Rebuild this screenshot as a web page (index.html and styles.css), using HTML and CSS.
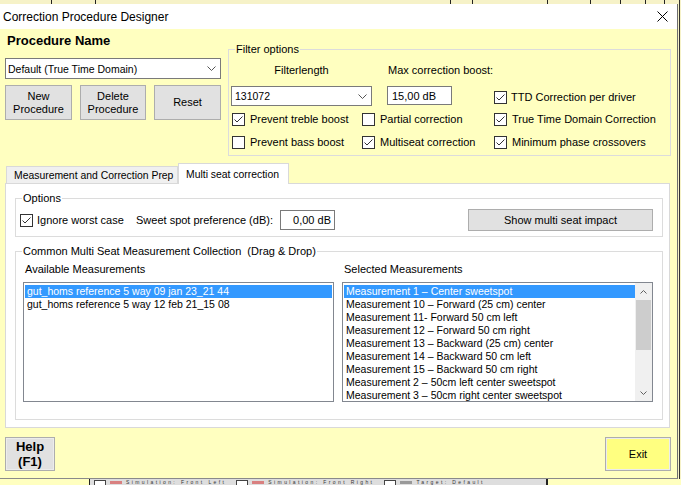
FILE: index.html
```html
<!DOCTYPE html>
<html>
<head>
<meta charset="utf-8">
<title>Correction Procedure Designer</title>
<link rel="stylesheet" href="styles.css">
</head>
<body>
<div class="screen">
  <div class="behind-top">
    <div class="seg s1"></div>
    <div class="seg s2"></div>
    <div class="seg s3"></div>
    <div class="seg s4"></div>
    <div class="seg s5"></div>
    <div class="seg s6"></div>
    <div class="seg s7"></div>
    <div class="seg s8"></div>
    <div class="seg s9"></div>
  </div>
  <div class="window">
    <div class="titlebar">
      <span class="title">Correction Procedure Designer</span>
      <svg class="close" width="11" height="11" viewBox="0 0 11 11"><path d="M0.5 0.5 L10.5 10.5 M10.5 0.5 L0.5 10.5" stroke="#000" stroke-width="1" fill="none"/></svg>
    </div>
    <div class="client">
      <div class="top-row">
        <div class="proc-col">
          <div class="proc-title">Procedure Name</div>
          <div class="combo proc-combo">
            <span>Default (True Time Domain)</span>
            <svg class="chev" width="9" height="5" viewBox="0 0 9 5"><path d="M0.5 0.5 L4.5 4.5 L8.5 0.5" stroke="#555" fill="none"/></svg>
          </div>
          <div class="proc-buttons">
            <div class="btn b-new">New<br>Procedure</div>
            <div class="btn b-del">Delete<br>Procedure</div>
            <div class="btn b-reset">Reset</div>
          </div>
        </div>
        <div class="group filter">
          <span class="legend">Filter options</span>
          <div class="frow r-labels">
            <span class="fl-label">Filterlength</span>
            <span class="mc-label">Max correction boost:</span>
          </div>
          <div class="frow r-inputs">
            <div class="combo fl-combo">
              <span>131072</span>
              <svg class="chev" width="9" height="5" viewBox="0 0 9 5"><path d="M0.5 0.5 L4.5 4.5 L8.5 0.5" stroke="#555" fill="none"/></svg>
            </div>
            <div class="textbox mc-box">15,00 dB</div>
            <label class="check ttd">
              <svg width="13" height="13" viewBox="0 0 13 13"><rect x="0.5" y="0.5" width="12" height="12" fill="#fff" stroke="#333"/><path d="M2.5 6.5 L5 9 L10.5 3.5" fill="none" stroke="#333"/></svg>
              <span>TTD Correction per driver</span>
            </label>
          </div>
          <div class="frow r-c">
            <label class="check">
              <svg width="13" height="13" viewBox="0 0 13 13"><rect x="0.5" y="0.5" width="12" height="12" fill="#fff" stroke="#333"/><path d="M2.5 6.5 L5 9 L10.5 3.5" fill="none" stroke="#333"/></svg>
              <span>Prevent treble boost</span>
            </label>
            <label class="check">
              <svg width="13" height="13" viewBox="0 0 13 13"><rect x="0.5" y="0.5" width="12" height="12" fill="#fff" stroke="#333"/></svg>
              <span>Partial correction</span>
            </label>
            <label class="check">
              <svg width="13" height="13" viewBox="0 0 13 13"><rect x="0.5" y="0.5" width="12" height="12" fill="#fff" stroke="#333"/><path d="M2.5 6.5 L5 9 L10.5 3.5" fill="none" stroke="#333"/></svg>
              <span>True Time Domain Correction</span>
            </label>
          </div>
          <div class="frow r-d">
            <label class="check">
              <svg width="13" height="13" viewBox="0 0 13 13"><rect x="0.5" y="0.5" width="12" height="12" fill="#fff" stroke="#333"/></svg>
              <span>Prevent bass boost</span>
            </label>
            <label class="check">
              <svg width="13" height="13" viewBox="0 0 13 13"><rect x="0.5" y="0.5" width="12" height="12" fill="#fff" stroke="#333"/><path d="M2.5 6.5 L5 9 L10.5 3.5" fill="none" stroke="#333"/></svg>
              <span>Multiseat correction</span>
            </label>
            <label class="check">
              <svg width="13" height="13" viewBox="0 0 13 13"><rect x="0.5" y="0.5" width="12" height="12" fill="#fff" stroke="#333"/><path d="M2.5 6.5 L5 9 L10.5 3.5" fill="none" stroke="#333"/></svg>
              <span>Minimum phase crossovers</span>
            </label>
          </div>
        </div>
      </div>

      <div class="tabs">
        <div class="tabstrip">
          <div class="tab tab1">Measurement and Correction Prep</div>
          <div class="tab active">Multi seat correction</div>
        </div>
        <div class="panel">
          <div class="group options">
            <span class="legend">Options</span>
            <div class="opt-row">
              <label class="check ignore">
                <svg width="13" height="13" viewBox="0 0 13 13"><rect x="0.5" y="0.5" width="12" height="12" fill="#fff" stroke="#333"/><path d="M2.5 6.5 L5 9 L10.5 3.5" fill="none" stroke="#333"/></svg>
                <span>Ignore worst case</span>
              </label>
              <span class="sweet-label">Sweet spot preference (dB):</span>
              <div class="textbox sweet-box">0,00 dB</div>
              <div class="btn impact">Show multi seat impact</div>
            </div>
          </div>
          <div class="group common">
            <span class="legend">Common Multi Seat Measurement Collection &nbsp;(Drag &amp; Drop)</span>
            <div class="lists">
              <div class="list-col">
                <div class="list-label">Available Measurements</div>
                <div class="listbox">
                  <div class="items">
                    <div class="item sel">gut_homs reference 5 way 09 jan 23_21 44</div>
                    <div class="item">gut_homs reference 5 way 12 feb 21_15 08</div>
                  </div>
                </div>
              </div>
              <div class="list-col">
                <div class="list-label">Selected Measurements</div>
                <div class="listbox scrolled">
                  <div class="items">
                    <div class="item sel">Measurement 1 – Center sweetspot</div>
                    <div class="item">Measurement 10 – Forward (25 cm) center</div>
                    <div class="item">Measurement 11- Forward 50 cm left</div>
                    <div class="item">Measurement 12 – Forward 50 cm right</div>
                    <div class="item">Measurement 13 – Backward (25 cm) center</div>
                    <div class="item">Measurement 14 – Backward 50 cm left</div>
                    <div class="item">Measurement 15 – Backward 50 cm right</div>
                    <div class="item">Measurement 2 – 50cm left center sweetspot</div>
                    <div class="item">Measurement 3 – 50cm right center sweetspot</div>
                  </div>
                  <div class="scrollbar">
                    <div class="sb-btn"><svg width="7" height="4" viewBox="0 0 7 4"><path d="M0.5 3.5 L3.5 0.5 L6.5 3.5" stroke="#606060" fill="none"/></svg></div>
                    <div class="sb-track"><div class="sb-thumb"></div></div>
                    <div class="sb-btn"><svg width="7" height="4" viewBox="0 0 7 4"><path d="M0.5 0.5 L3.5 3.5 L6.5 0.5" stroke="#606060" fill="none"/></svg></div>
                  </div>
                </div>
              </div>
            </div>
          </div>
        </div>
      </div>

      <div class="footer">
        <div class="btn help">Help<br>(F1)</div>
        <div class="btn exit">Exit</div>
      </div>
    </div>
  </div>
  <div class="behind-bottom">
    <div class="legend-strip">
      <span class="lg-item"><span class="lg-check"></span><span class="lg-line red"></span><span class="lg-text">Simulation: Front Left</span></span>
      <span class="lg-item"><span class="lg-check"></span><span class="lg-line red"></span><span class="lg-text">Simulation: Front Right</span></span>
      <span class="lg-item"><span class="lg-check"></span><span class="lg-line grey"></span><span class="lg-text">Target: Default</span></span>
    </div>
  </div>
</div>
</body>
</html>
```

FILE: styles.css
```css
* { box-sizing: border-box; }
html, body { margin: 0; padding: 0; }
body {
  width: 681px;
  height: 485px;
  overflow: hidden;
  font-family: "Liberation Sans", Arial, sans-serif;
  font-size: 11px;
  color: #000;
  background: linear-gradient(to right, transparent 679px, #333 679px, #333 680px, transparent 680px), #f6f2c8;
}
.screen {
  width: 681px;
  height: 485px;
  display: flex;
  flex-direction: column;
}

/* content behind the dialog */
.behind-top {
  height: 4px;
  display: flex;
}
.seg { height: 4px; border-right: 1px solid #222; flex: none; }
.s1 { width: 52px; }
.s2 { width: 44px; }
.s3 { width: 355px; }
.s4 { width: 22px; }
.s5 { width: 75px; }
.s6 { width: 43px; }
.s7 { width: 30px; }
.s8 { width: 25px; }
.s9 { width: 19px; }

.behind-bottom {
  height: 6px;
  overflow: hidden;
  padding-left: 89px;
  background: #ffffc0;
}
.legend-strip {
  width: 459px;
  height: 6px;
  background: #dedede;
  border-left: 1px solid #222;
  border-right: 2px solid #222;
  display: flex;
  gap: 10px;
  padding: 1px 0 0 4px;
  white-space: nowrap;
}
.lg-item { display: flex; align-items: flex-start; gap: 4px; }
.lg-check { border: 1px solid #444; border-bottom: none; background: #fff; width: 12px; height: 5px; }
.lg-line { width: 12px; height: 3px; margin-top: 1px; }
.lg-line.red { background: #d98080; }
.lg-line.grey { background: #999; }
.lg-text { font-size: 5px; line-height: 5px; color: #333; letter-spacing: 2.4px; }

/* window */
.window {
  width: 678px;
  height: 475px;
  border-right: 1px solid #6f6f6f;
  border-bottom: 1px solid #8a8a8a;
  background: #ffffc0;
  display: flex;
  flex-direction: column;
}
.titlebar {
  height: 25px;
  flex: none;
  background: #fff;
  display: flex;
  align-items: center;
  justify-content: space-between;
  padding: 0 9px 0 3px;
  font-size: 12px;
}
.close { display: block; }

.client {
  flex: 1;
  display: flex;
  flex-direction: column;
  padding: 0 6px 7px 5px;
}
.top-row {
  height: 127px;
  display: flex;
  gap: 7px;
}
.proc-col {
  width: 216px;
  padding-top: 4px;
  display: flex;
  flex-direction: column;
}
.proc-title {
  font-weight: bold;
  font-size: 13px;
  line-height: 15px;
  height: 15px;
  padding-left: 2px;
}
.combo {
  background: #fff;
  border: 1px solid #7a7a7a;
  display: flex;
  align-items: center;
  justify-content: space-between;
  padding: 0 4px 0 2px;
  font-size: 10.5px;
  white-space: nowrap;
}
.chev { display: block; }
.proc-combo { margin-top: 10px; height: 21px; }
.proc-buttons {
  margin-top: 6px;
  display: flex;
  gap: 8px;
}
.btn {
  background: #e1e1e1;
  border: 1px solid #adadad;
  display: flex;
  align-items: center;
  justify-content: center;
  text-align: center;
  font-size: 11px;
  line-height: 13px;
}
.proc-buttons .btn { height: 35px; }
.b-new { width: 67px; }
.b-del { width: 66px; }
.b-reset { width: 67px; }

/* group boxes */
.group {
  position: relative;
  border: 1px solid #dcdcdc;
}
.legend {
  position: absolute;
  top: -7px;
  left: 6px;
  padding: 0 1px;
  line-height: 13px;
  background: #ffffc0;
  white-space: nowrap;
}
.panel .legend { background: #fff; }

.filter {
  margin-top: 20px;
  width: 443px;
  height: 107px;
  padding: 13px 0 0 3px;
  display: flex;
  flex-direction: column;
}
.frow {
  display: grid;
  grid-template-columns: 130px 132px 1fr;
}
.r-labels { height: 14px; line-height: 14px; }
.fl-label { width: 141px; margin-left: -1px; text-align: center; }
.mc-label { margin-left: 26px; white-space: nowrap; }
.r-inputs { margin-top: 9px; height: 20px; }
.fl-combo { width: 141px; height: 20px; margin-left: -1px; padding-left: 3px; }
.textbox {
  background: #fff;
  border: 1px solid #7a7a7a;
  font-size: 11px;
  display: flex;
  align-items: center;
  white-space: nowrap;
}
.mc-box { width: 65px; height: 19px; margin-left: 25px; padding-left: 4px; }
.r-c { margin-top: 7px; height: 13px; }
.r-d { margin-top: 10px; height: 13px; }

.check {
  display: flex;
  align-items: center;
  gap: 5px;
  line-height: 13px;
  white-space: nowrap;
}
.check svg { display: block; flex: none; }
.ttd { align-self: start; margin-top: 5px; gap: 4px; }

/* tabs */
.tabs {
  margin-top: 7px;
  width: 665px;
  display: flex;
  flex-direction: column;
}
.tabstrip {
  height: 21px;
  display: flex;
  align-items: flex-end;
  padding-left: 1px;
  margin-bottom: -1px;
  position: relative;
  z-index: 1;
}
.tab {
  border: 1px solid #d9d9d9;
  border-bottom: none;
  background: #f0f0f0;
  display: flex;
  align-items: center;
  padding-left: 7px;
  font-size: 10.4px;
  white-space: nowrap;
}
.tab1 { width: 172px; height: 17px; margin-bottom: 1px; }
.tab.active { width: 111px; height: 21px; background: #fff; }
.panel {
  height: 245px;
  background: #fff;
  border: 1px solid #d9d9d9;
  padding: 14px 0 0 9px;
  display: flex;
  flex-direction: column;
}
.options {
  width: 648px;
  height: 39px;
  padding: 10px 9px 0 4px;
}
.opt-row {
  height: 22px;
  display: flex;
  align-items: center;
}
.ignore { width: 116px; gap: 4px; }
.sweet-label { width: 144px; white-space: nowrap; }
.sweet-box { width: 55px; height: 20px; justify-content: flex-end; padding-right: 3px; }
.impact { margin-left: auto; width: 185px; height: 22px; }

.common {
  margin-top: 14px;
  width: 648px;
  height: 169px;
  padding: 10px 0 0 7px;
}
.lists { display: flex; gap: 8px; }
.list-col { width: 311px; display: flex; flex-direction: column; }
.list-label { height: 14px; line-height: 14px; padding-left: 2px; }
.listbox {
  margin-top: 6px;
  height: 120px;
  border: 1px solid #828790;
  background: #fff;
  padding: 2px 1px 1px 1px;
  display: flex;
  font-size: 10.5px;
}
.listbox.scrolled { padding: 2px 0 0 1px; }
.items { flex: 1; }
.item {
  height: 13px;
  line-height: 13px;
  padding-left: 2px;
  white-space: nowrap;
  overflow: hidden;
}
.item.sel { background: #3399ff; color: #fff; }
.scrollbar {
  width: 17px;
  margin-top: -2px;
  height: 118px;
  background: #f0f0f0;
  display: flex;
  flex-direction: column;
}
.sb-btn {
  height: 17px;
  display: flex;
  align-items: center;
  justify-content: center;
}
.sb-btn svg { display: block; }
.sb-track { flex: 1; padding: 0 1px; }
.sb-thumb { height: 50px; background: #cdcdcd; }

/* footer */
.footer {
  margin-top: 9px;
  display: flex;
  justify-content: space-between;
  align-items: flex-start;
}
.help {
  width: 50px;
  height: 34px;
  font-weight: bold;
  font-size: 13px;
  line-height: 15px;
  box-shadow: inset 0 0 0 1px #ececec;
}
.exit {
  width: 66px;
  height: 34px;
  background: #ffff80;
  box-shadow: inset 0 0 0 1px #ececec;
}
```
